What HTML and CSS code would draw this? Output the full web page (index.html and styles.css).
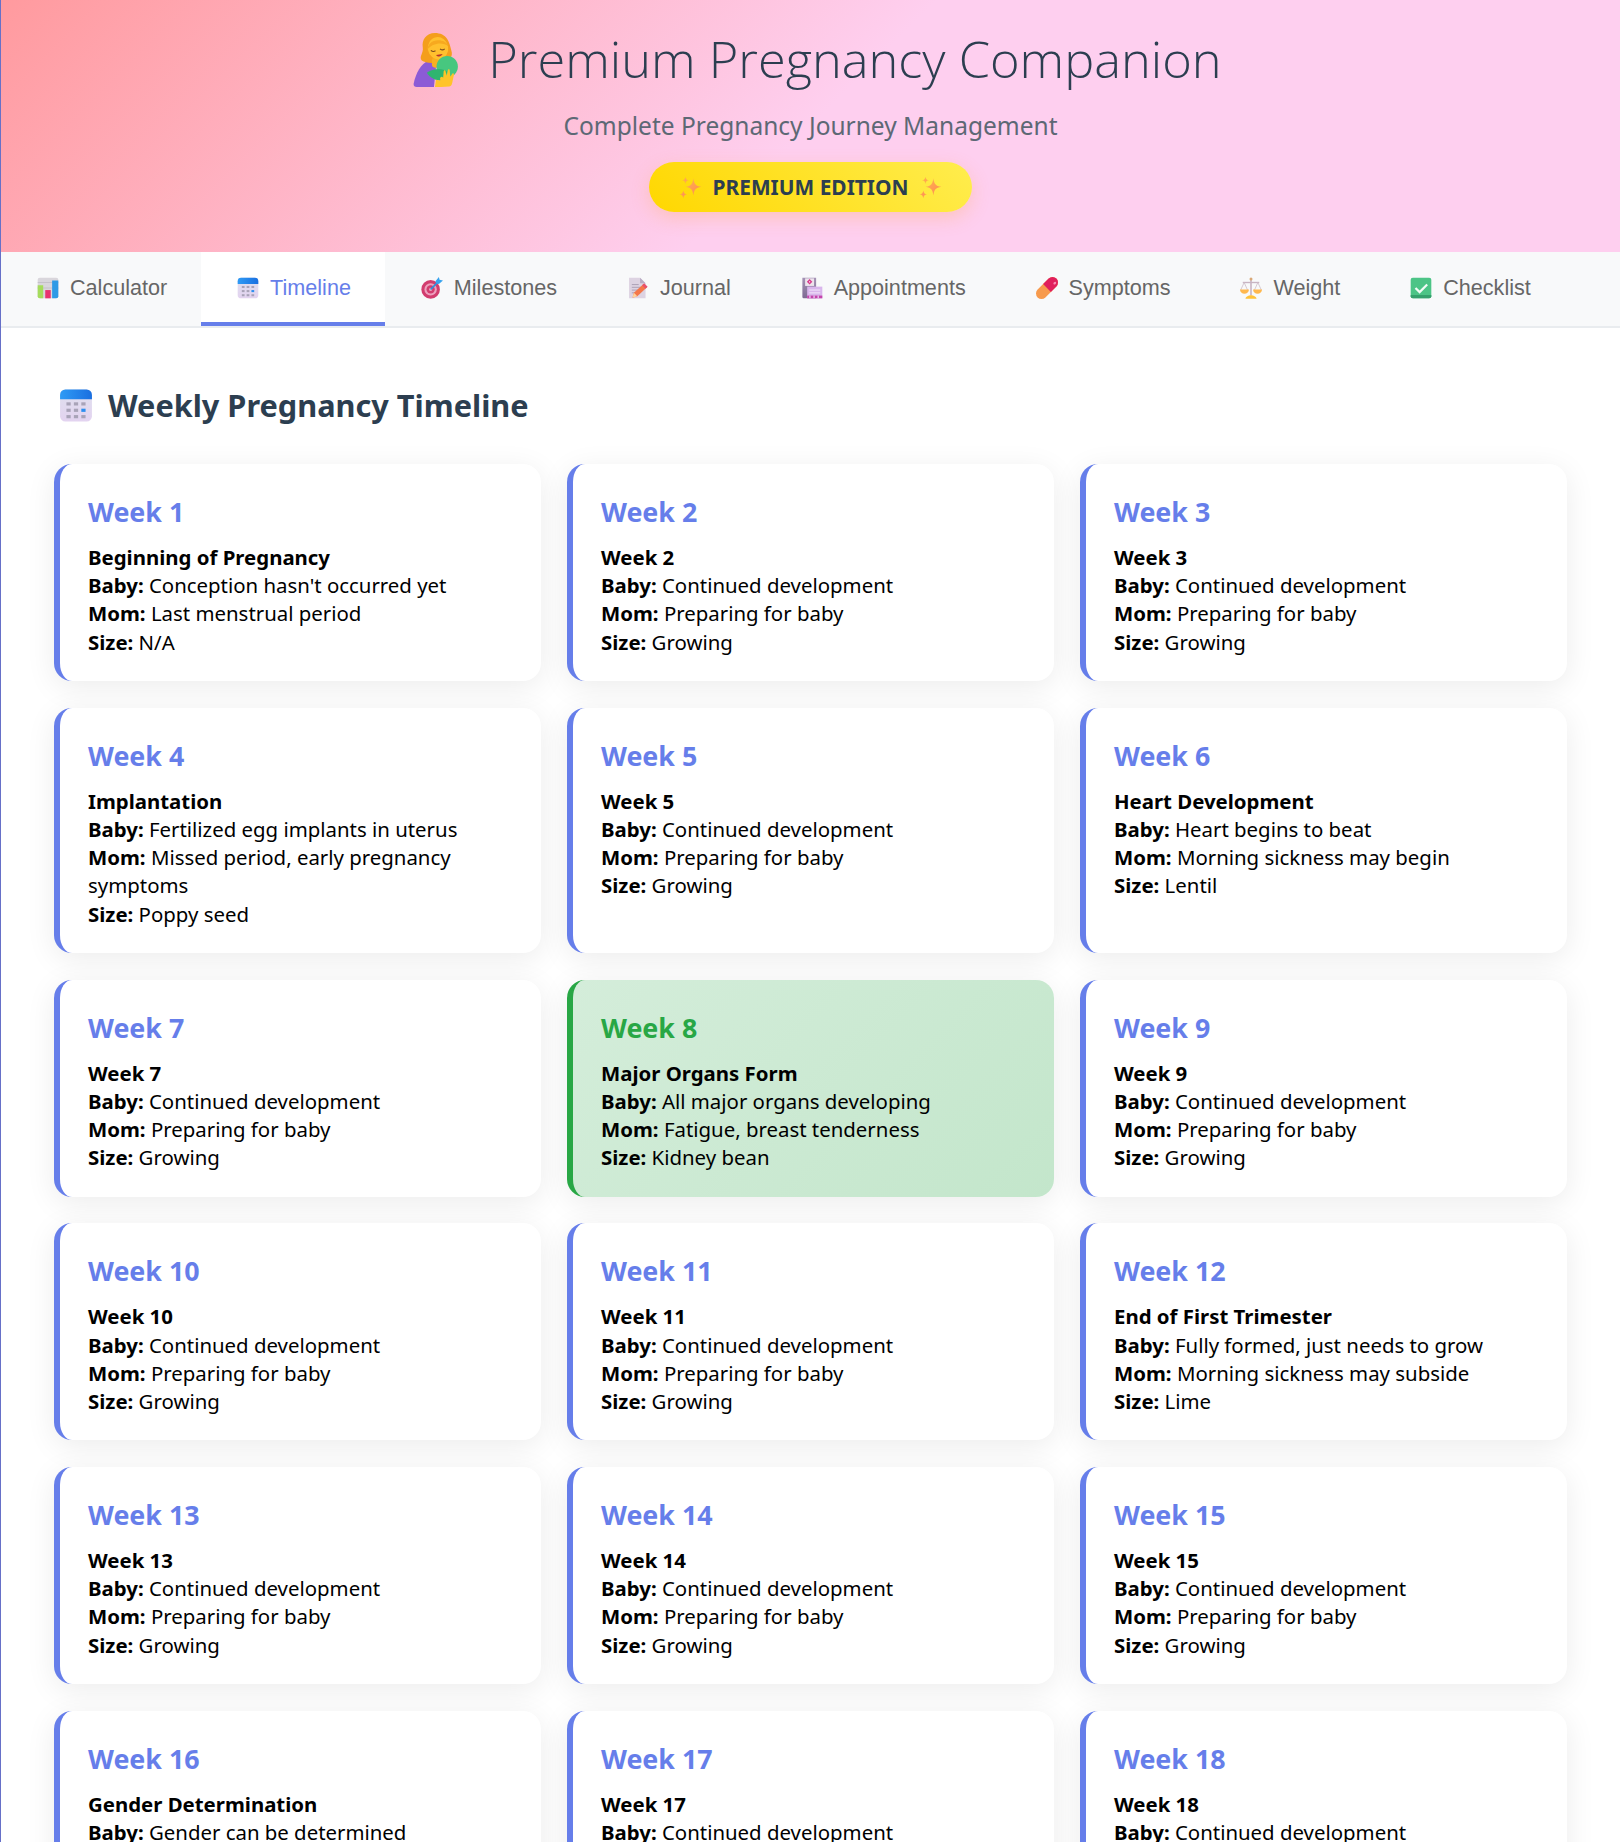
FILE: index.html
```html
<!DOCTYPE html>
<html lang="en">
<head>
<meta charset="utf-8">
<title>Premium Pregnancy Companion</title>
<link rel="stylesheet" href="styles.css">
</head>
<body>
<svg class="defs" width="0" height="0" aria-hidden="true">
<defs>
<linearGradient id="calTop" x1="0" y1="0" x2="1" y2="0"><stop offset="0" stop-color="#2f9bf5"/><stop offset="1" stop-color="#1a6fe0"/></linearGradient>
<linearGradient id="calBody" x1="0" y1="0" x2="0" y2="1"><stop offset="0" stop-color="#dfe0ee"/><stop offset="1" stop-color="#e3d3f0"/></linearGradient>
<linearGradient id="spark" x1="0" y1="0" x2="1" y2="1"><stop offset="0" stop-color="#ffb54e"/><stop offset="1" stop-color="#ff8655"/></linearGradient>
<linearGradient id="appt" x1="0" y1="0" x2="0" y2="1"><stop offset="0" stop-color="#a593b5"/><stop offset="1" stop-color="#7d6a92"/></linearGradient>
<symbol id="i-calendar" viewBox="0 0 32 32">
<rect x="1" y="1" width="30" height="30" rx="5" fill="url(#calBody)"/>
<path d="M1 10V6a5 5 0 0 1 5-5h20a5 5 0 0 1 5 5v4z" fill="url(#calTop)"/>
<g fill="#a9a3b8"><rect x="7" y="13" width="4" height="3"/><rect x="14" y="13" width="4" height="3"/><rect x="21" y="13" width="4" height="3"/><rect x="7" y="19" width="4" height="3"/><rect x="14" y="19" width="4" height="3"/><rect x="7" y="25" width="4" height="3"/><rect x="14" y="25" width="4" height="3"/><rect x="21" y="25" width="4" height="3"/></g>
<rect x="21" y="19" width="4" height="3" fill="#2d8ff0"/>
</symbol>
<symbol id="i-chart" viewBox="0 0 32 32">
<rect x="1" y="1" width="30" height="30" rx="3" fill="#d9d6dc"/>
<path d="M1 8h30M1 16h30" stroke="#bcb8c2" stroke-width="1"/>
<path d="M1 12h8v19H4a3 3 0 0 1-3-3z" fill="#a5dc5c"/>
<rect x="12" y="19" width="8" height="12" fill="#e8336f"/>
<path d="M22 5h9v23a3 3 0 0 1-3 3h-6z" fill="#2d9ae6"/>
</symbol>
<symbol id="i-target" viewBox="0 0 32 32">
<circle cx="14" cy="18" r="13.500" fill="#d23c6e"/>
<circle cx="14" cy="18" r="9" fill="#eda0bd"/>
<circle cx="14" cy="18" r="6" fill="#d23c6e"/>
<circle cx="14" cy="18" r="2.200" fill="#eda0bd"/>
<path d="M14 18 26 6" stroke="#2d8fdc" stroke-width="2.200"/>
<path d="M21 6l5-6 1 4 5 1-6 5-4-1z" fill="#37a3ee"/>
</symbol>
<symbol id="i-page" viewBox="0 0 32 32">
<path d="M3 1h16l8 8v22H3z" fill="#ddd3e2"/>
<path d="M19 1l8 8h-8z" fill="#b9adc4"/>
<path d="M7 11h10M7 15h14M7 19h10M7 23h6" stroke="#a79bb0" stroke-width="1.300"/>
<path d="M8 30l2-7L24 10l5 5-14 13z" fill="#f4774a"/>
<path d="M8 30l2-7 5 5z" fill="#ffd39c"/>
<path d="M22 12l3-3 5 5-3 3z" fill="#e8506a"/>
</symbol>
<symbol id="i-appt" viewBox="0 0 32 32">
<path d="M2 1h20v30H4a2 2 0 0 1-2-2z" fill="url(#appt)"/>
<rect x="6" y="2" width="13" height="11" fill="#ece4ec"/>
<path d="M12.500 3l4 4-4 4-4-4z" fill="#d83a8c"/>
<circle cx="12.500" cy="7" r="1" fill="#fff"/>
<rect x="9" y="14" width="22" height="17" fill="#d9b6ec"/>
<rect x="12" y="18" width="16" height="2" fill="#ecd9f6"/>
<rect x="12" y="22" width="16" height="2" fill="#ecd9f6"/>
<path d="M9 27h22v4H9z" fill="#c445ac"/>
<path d="M13 27v4M19 27v4M25 27v4" stroke="#e8c6ef" stroke-width="2"/>
</symbol>
<symbol id="i-pill" viewBox="0 0 32 32">
<g transform="rotate(45 16 16)">
<rect x="8" y="-3.300" width="16" height="38.600" rx="8" fill="#f79a4c"/>
<path d="M8 16V4.700a8 8 0 0 1 16 0V16z" fill="#e01f5c"/>
<ellipse cx="19" cy="3" rx="1.700" ry="2.300" fill="#f98bb0"/>
</g>
</symbol>
<symbol id="i-scale" viewBox="0 0 32 32">
<path d="M16 2v25" stroke="#c9b6c4" stroke-width="2.400"/>
<circle cx="16" cy="3" r="2.200" fill="#d9a877"/>
<path d="M4 8h24" stroke="#c8b4c2" stroke-width="2"/>
<path d="M6 8 1 19M6 8l5 11M26 8l-5 11M26 8l5 11" stroke="#cdbdc8" stroke-width="1.200"/>
<path d="M0 18h13a6.500 6.500 0 0 1-13 0zM19 18h13a6.500 6.500 0 0 1-13 0z" fill="#ffb84e"/>
<path d="M8 31.500c0-3 5-5 8-5s8 2 8 5z" fill="#ffc239"/>
</symbol>
<symbol id="i-check" viewBox="0 0 32 32">
<rect x="1" y="1" width="30" height="30" rx="3" fill="#4cc486"/>
<path d="M1 26v2a3 3 0 0 0 3 3h24a3 3 0 0 0 3-3v-2z" fill="#35a06c"/>
<path d="M8 16l6 6 11-11" fill="none" stroke="#f2fbf6" stroke-width="3.200"/>
</symbol>
<symbol id="i-sparkles" viewBox="0 0 32 32">
<path d="M20 3c1 8 3 10.500 11 12-8 1.500-10 4-11 12-1-8-3-10.500-11-12 8-1.500 10-4 11-12z" fill="url(#spark)"/>
<path d="M9 1c.5 3.500 1.500 4.500 5 5-3.500.5-4.500 1.500-5 5-.5-3.500-1.500-4.500-5-5 3.500-.5 4.500-1.500 5-5z" fill="#ffa94e"/>
<path d="M6 20c.5 3.500 1.500 4.500 5 5.500-3.500 1-4.500 2-5 5.500-.5-3.500-1.500-4.500-5-5.500 3.500-1 4.500-2 5-5.500z" fill="#ff9655"/>
</symbol>
<symbol id="i-mother" viewBox="0 0 44 54">
<path d="M0 50C2 40 7 30 15 27l7 6-2 20H3q-3 0-3-3z" fill="#8c5bd6"/>
<path d="M21 0C12 0 8 7 9 14c1 6-4 9-1 13 4 3 12 3 20 1 8-1 11-5 9-11-1-4-2-8-4-11-2-4-7-6-12-6z" fill="#f49e1c"/>
<rect x="18" y="24" width="9" height="10" rx="3" fill="#f7b021"/>
<ellipse cx="24" cy="15" rx="10" ry="11" transform="rotate(-10 24 15)" fill="#ffc02e"/>
<path d="M13 17c1-6 5-10 11-10 5 0 9 2 10 6-5-4-15-4-21 4z" fill="#f7a91f"/>
<path d="M17 17c1.500 1.500 3 1.500 4.500.5M26 15.500c1.500 1.500 3 1.500 4.500 0" fill="none" stroke="#7a4a1e" stroke-width="1.100"/>
<path d="M22 21.500c2 2.500 5 2 6.500-.8z" fill="#b5322a"/>
<circle cx="33" cy="33" r="10.500" fill="#47c77f"/>
<path d="M13 39c6-4 15-5 20-1l-4 9c-7 0-13-3-16-8z" fill="#2fb56f"/>
<path d="M21 53l1-7 5 1v6zM27 53l-1-8c0-2 2-3 3-1l.5-6c0-2 2-2 2 0l1 4 1-5c.5-2 2-1.500 2 0l.5 6 2-3c1-1 2 0 1.500 1.500l-1.500 7c-.5 3-2 4-3 4z" fill="#ffc429"/>
</symbol>
</defs>
</svg>
<div class="app">
<header class="hero">
<h1 class="hero-title"><svg class="hero-icon"><use href="#i-mother"/></svg><span>Premium Pregnancy Companion</span></h1>
<p class="hero-sub">Complete Pregnancy Journey Management</p>
<div class="badge"><svg class="badge-icon"><use href="#i-sparkles"/></svg><span>PREMIUM EDITION</span><svg class="badge-icon"><use href="#i-sparkles"/></svg></div>
</header>
<nav class="tabs">
<div class="tab"><svg class="tab-icon"><use href="#i-chart"/></svg>Calculator</div>
<div class="tab tab-active"><svg class="tab-icon"><use href="#i-calendar"/></svg>Timeline</div>
<div class="tab"><svg class="tab-icon"><use href="#i-target"/></svg>Milestones</div>
<div class="tab"><svg class="tab-icon"><use href="#i-page"/></svg>Journal</div>
<div class="tab"><svg class="tab-icon"><use href="#i-appt"/></svg>Appointments</div>
<div class="tab"><svg class="tab-icon"><use href="#i-pill"/></svg>Symptoms</div>
<div class="tab"><svg class="tab-icon"><use href="#i-scale"/></svg>Weight</div>
<div class="tab"><svg class="tab-icon"><use href="#i-check"/></svg>Checklist</div>
</nav>
<main class="content">
<h2 class="section-title"><svg class="section-icon"><use href="#i-calendar"/></svg>Weekly Pregnancy Timeline</h2>
<div class="grid">
<article class="card"><h3>Week 1</h3><p><strong>Beginning of Pregnancy</strong><br><strong>Baby:</strong> Conception hasn't occurred yet<br><strong>Mom:</strong> Last menstrual period<br><strong>Size:</strong> N/A</p></article>
<article class="card"><h3>Week 2</h3><p><strong>Week 2</strong><br><strong>Baby:</strong> Continued development<br><strong>Mom:</strong> Preparing for baby<br><strong>Size:</strong> Growing</p></article>
<article class="card"><h3>Week 3</h3><p><strong>Week 3</strong><br><strong>Baby:</strong> Continued development<br><strong>Mom:</strong> Preparing for baby<br><strong>Size:</strong> Growing</p></article>
<article class="card"><h3>Week 4</h3><p><strong>Implantation</strong><br><strong>Baby:</strong> Fertilized egg implants in uterus<br><strong>Mom:</strong> Missed period, early pregnancy symptoms<br><strong>Size:</strong> Poppy seed</p></article>
<article class="card"><h3>Week 5</h3><p><strong>Week 5</strong><br><strong>Baby:</strong> Continued development<br><strong>Mom:</strong> Preparing for baby<br><strong>Size:</strong> Growing</p></article>
<article class="card"><h3>Week 6</h3><p><strong>Heart Development</strong><br><strong>Baby:</strong> Heart begins to beat<br><strong>Mom:</strong> Morning sickness may begin<br><strong>Size:</strong> Lentil</p></article>
<article class="card"><h3>Week 7</h3><p><strong>Week 7</strong><br><strong>Baby:</strong> Continued development<br><strong>Mom:</strong> Preparing for baby<br><strong>Size:</strong> Growing</p></article>
<article class="card card-current"><h3>Week 8</h3><p><strong>Major Organs Form</strong><br><strong>Baby:</strong> All major organs developing<br><strong>Mom:</strong> Fatigue, breast tenderness<br><strong>Size:</strong> Kidney bean</p></article>
<article class="card"><h3>Week 9</h3><p><strong>Week 9</strong><br><strong>Baby:</strong> Continued development<br><strong>Mom:</strong> Preparing for baby<br><strong>Size:</strong> Growing</p></article>
<article class="card"><h3>Week 10</h3><p><strong>Week 10</strong><br><strong>Baby:</strong> Continued development<br><strong>Mom:</strong> Preparing for baby<br><strong>Size:</strong> Growing</p></article>
<article class="card"><h3>Week 11</h3><p><strong>Week 11</strong><br><strong>Baby:</strong> Continued development<br><strong>Mom:</strong> Preparing for baby<br><strong>Size:</strong> Growing</p></article>
<article class="card"><h3>Week 12</h3><p><strong>End of First Trimester</strong><br><strong>Baby:</strong> Fully formed, just needs to grow<br><strong>Mom:</strong> Morning sickness may subside<br><strong>Size:</strong> Lime</p></article>
<article class="card"><h3>Week 13</h3><p><strong>Week 13</strong><br><strong>Baby:</strong> Continued development<br><strong>Mom:</strong> Preparing for baby<br><strong>Size:</strong> Growing</p></article>
<article class="card"><h3>Week 14</h3><p><strong>Week 14</strong><br><strong>Baby:</strong> Continued development<br><strong>Mom:</strong> Preparing for baby<br><strong>Size:</strong> Growing</p></article>
<article class="card"><h3>Week 15</h3><p><strong>Week 15</strong><br><strong>Baby:</strong> Continued development<br><strong>Mom:</strong> Preparing for baby<br><strong>Size:</strong> Growing</p></article>
<article class="card"><h3>Week 16</h3><p><strong>Gender Determination</strong><br><strong>Baby:</strong> Gender can be determined<br><strong>Mom:</strong> Energy returning<br><strong>Size:</strong> Avocado</p></article>
<article class="card"><h3>Week 17</h3><p><strong>Week 17</strong><br><strong>Baby:</strong> Continued development<br><strong>Mom:</strong> Preparing for baby<br><strong>Size:</strong> Growing</p></article>
<article class="card"><h3>Week 18</h3><p><strong>Week 18</strong><br><strong>Baby:</strong> Continued development<br><strong>Mom:</strong> Preparing for baby<br><strong>Size:</strong> Growing</p></article>
</div>
</main>
</div>
</body>
</html>
```
FILE: styles.css
```css
* { box-sizing: border-box; }
html, body { margin: 0; padding: 0; }
body {
  height: 1842px;
  overflow: hidden;
  background: #6670c8;
  font-family: "Noto Sans", "Open Sans", sans-serif;
  color: #000;
}
.defs { position: absolute; }
.app { margin-left: 1px; background: #fff; }
.hero {
  height: 252px;
  padding-top: 26px;
  background: linear-gradient(135deg, #ff9a9e 0%, #fecfef 50%, #fecfef 100%);
  text-align: center;
}
.hero-title {
  margin: 0;
  height: 66px;
  padding-left: 14px;
  display: flex;
  justify-content: center;
  align-items: center;
  gap: 29px;
  font-family: "Open Sans", sans-serif;
  font-size: 50.500px;
  font-weight: 300;
  line-height: 66px;
  color: #2c3e50;
}
.hero-icon { width: 46px; height: 55px; margin-top: 3px; }
.hero-sub {
  margin: 18px 0 0;
  font-size: 24.500px;
  line-height: 32px;
  color: #5d6875;
}
.badge {
  display: inline-flex;
  align-items: center;
  gap: 11px;
  margin-top: 20px;
  height: 50px;
  padding: 0 29.500px;
  border-radius: 25px;
  background: linear-gradient(45deg, #ffd700, #ffed4e);
  box-shadow: 0 6px 18px rgba(255, 170, 80, 0.3);
  font-size: 20.900px;
  font-weight: 700;
  color: #2c3e50;
}
.badge-icon { width: 23px; height: 23px; }
.tabs {
  display: flex;
  height: 76px;
  background: #f8f9fa;
  border-bottom: 2px solid #e9ecef;
}
.tab {
  display: flex;
  align-items: center;
  gap: 11px;
  height: 74px;
  padding: 0 33.900px 3px 36px;
  font-family: "Liberation Sans", Arial, sans-serif;
  font-size: 21.600px;
  color: #666;
  white-space: nowrap;
}
.tab-active {
  background: #fff;
  color: #667eea;
  border-bottom: 4px solid #667eea;
  padding-top: 1px;
  padding-bottom: 0;
}
.tab-icon { width: 22px; height: 22px; flex: none; }
.content { padding: 55px 53px 0; }
.section-title {
  display: flex;
  align-items: center;
  gap: 15px;
  margin: 0 0 37px;
  height: 44px;
  font-size: 30.700px;
  font-weight: 700;
  color: #2c3e50;
}
.section-icon { width: 34px; height: 35px; margin-left: 5px; }
.grid {
  display: grid;
  grid-template-columns: repeat(3, 1fr);
  gap: 26.600px 26px;
}
.card {
  padding: 30px 27px 25.300px 28px;
  background: #fff;
  border-left: 6px solid #667eea;
  border-radius: 18px;
  box-shadow: 0 6px 30px rgba(0, 0, 0, 0.08);
}
.card h3 {
  margin: 0 0 13px;
  font-size: 26.800px;
  line-height: 36px;
  font-weight: 700;
  color: #667eea;
}
.card p {
  margin: 0;
  font-size: 20.400px;
  line-height: 28.200px;
}
.card strong { font-weight: 700; }
.card-current {
  background: linear-gradient(135deg, #d4edda, #c3e6cb);
  border-left-color: #28a745;
}
.card-current h3 { color: #28a745; }
```
